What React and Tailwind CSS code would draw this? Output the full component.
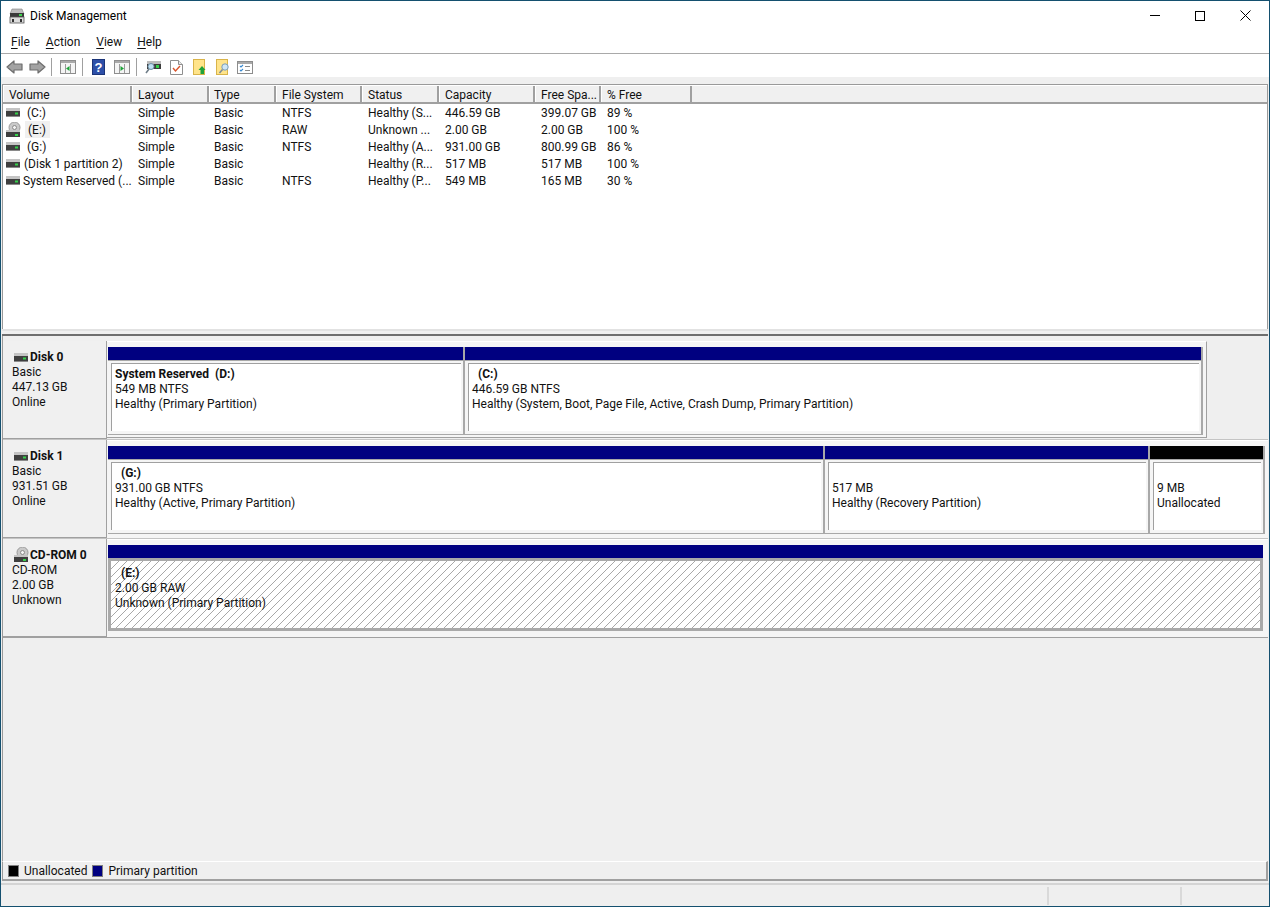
import React from "react";

const HEADER_WIDTHS = ["w-[129px]", "w-[77px]", "w-[67px]", "w-[86px]", "w-[77px]", "w-[96px]", "w-[66px]", "w-[91px]"];
const COL_WIDTHS = ["w-[128px]", "w-[76px]", "w-[68px]", "w-[86px]", "w-[77px]", "w-[96px]", "w-[66px]", "w-[91px]"];
const COLUMNS = ["Volume", "Layout", "Type", "File System", "Status", "Capacity", "Free Spa...", "% Free"];

const VOLUMES = [
  { icon: "hdd", offset: "ml-[4px]", name: " (C:)", cells: ["Simple", "Basic", "NTFS", "Healthy (S...", "446.59 GB", "399.07 GB", "89 %"] },
  { icon: "cd", offset: "ml-[4px]", name: " (E:)", selected: true, cells: ["Simple", "Basic", "RAW", "Unknown ...", "2.00 GB", "2.00 GB", "100 %"] },
  { icon: "hdd", offset: "ml-[4px]", name: " (G:)", cells: ["Simple", "Basic", "NTFS", "Healthy (A...", "931.00 GB", "800.99 GB", "86 %"] },
  { icon: "hdd", offset: "ml-[4px]", name: "(Disk 1 partition 2)", cells: ["Simple", "Basic", "", "Healthy (R...", "517 MB", "517 MB", "100 %"] },
  { icon: "hdd", offset: "ml-[3px]", name: "System Reserved (...", cells: ["Simple", "Basic", "NTFS", "Healthy (P...", "549 MB", "165 MB", "30 %"] },
];

function HddIcon() {
  return (
    <svg width="14" height="9" viewBox="0 0 14 9" className="shrink-0">
      <rect x="0" y="0" width="14" height="3" fill="#c4c4c4" />
      <rect x="0" y="3" width="14" height="5" fill="#3f3f3f" />
      <rect x="0" y="8" width="14" height="1" fill="#8a8a8a" />
      <rect x="9" y="4.5" width="3" height="2" fill="#35d04a" />
    </svg>
  );
}

function CdIcon() {
  return (
    <svg width="15" height="16" viewBox="0 0 15 16" className="shrink-0">
      <circle cx="8.5" cy="5.5" r="5.5" fill="#c9c9c9" stroke="#9a9a9a" />
      <circle cx="8.5" cy="5.5" r="2" fill="#f4f4f4" stroke="#8a8a8a" />
      <rect x="0" y="8" width="14" height="2" fill="#c4c4c4" />
      <rect x="0" y="10" width="14" height="5" fill="#3f3f3f" />
      <rect x="9" y="12" width="3" height="2" fill="#35d04a" />
    </svg>
  );
}

function AppIcon() {
  return (
    <svg width="16" height="16" viewBox="0 0 16 16" className="shrink-0">
      <path d="M3 1h10l2 5H1z" fill="#bdbdbd" stroke="#7f7f7f" strokeWidth="0.6" />
      <rect x="1" y="5" width="14" height="4" fill="#3a3a3a" />
      <rect x="10" y="6" width="3" height="2" fill="#3fd44f" />
      <rect x="1" y="9" width="14" height="6" fill="#dcdcdc" stroke="#555" strokeWidth="0.8" />
      <rect x="3" y="11" width="2" height="3" fill="#333" />
      <rect x="11" y="11" width="2" height="3" fill="#333" />
    </svg>
  );
}

function ArrowIcon({ flip }) {
  return (
    <svg width="17" height="14" viewBox="0 0 17 14" className={flip ? "-scale-x-100" : ""}>
      <path d="M1 7 8 1v3h8v6H8v3z" fill="#a3a3a3" stroke="#6e6e6e" strokeWidth="1.2" strokeLinejoin="round" />
    </svg>
  );
}

function PaneIcon({ right }) {
  return (
    <svg width="16" height="14" viewBox="0 0 16 14">
      <rect x="0.5" y="0.5" width="15" height="13" fill="#f4f4f4" stroke="#8d8d8d" />
      <rect x="1" y="1" width="14" height="2" fill="#a9a9a9" />
      <path d="M5.5 4v9M10.5 4v9" stroke="#9a9a9a" />
      {right ? <path d="M6.5 6v5l3.5-2.5z" fill="#1fa33a" /> : <path d="M9.5 6v5L6 8.5z" fill="#1fa33a" />}
    </svg>
  );
}

function HelpIcon() {
  return (
    <div className="w-[13px] h-[16px] bg-[#2d4fa8] border border-[#1b3478] flex items-center justify-center text-white text-[13px] font-bold leading-none font-['Liberation_Sans',sans-serif]">
      ?
    </div>
  );
}

function RescanIcon() {
  return (
    <svg width="16" height="14" viewBox="0 0 16 14">
      <rect x="2" y="1" width="14" height="3" fill="#bdbdbd" />
      <rect x="2" y="4" width="14" height="5" fill="#3d3d3d" />
      <rect x="11" y="5" width="3" height="3" fill="#35d04a" />
      <circle cx="6" cy="6.5" r="3" fill="#bfe0f2" stroke="#6f8fa6" />
      <path d="M4 9 1 13" stroke="#6f7d88" strokeWidth="1.6" />
    </svg>
  );
}

function CheckDocIcon() {
  return (
    <svg width="13" height="15" viewBox="0 0 13 15">
      <path d="M.5.5h8l4 4v10H.5z" fill="#fff" stroke="#8f8f8f" />
      <path d="M8.5.5v4h4" fill="#e8e8e8" stroke="#8f8f8f" />
      <path d="m3 8 2.5 3L10 6" fill="none" stroke="#d9542b" strokeWidth="1.4" />
    </svg>
  );
}

function YellowIcon({ children }) {
  return (
    <svg width="14" height="16" viewBox="0 0 14 16" className="overflow-visible">
      <rect x="0.5" y="0.5" width="11" height="15" fill="#ffe48a" stroke="#d9b44a" />
      {children}
    </svg>
  );
}

function PropsIcon() {
  return (
    <svg width="16" height="13" viewBox="0 0 16 13">
      <rect x="0.5" y="0.5" width="15" height="12" fill="#fff" stroke="#8d8d8d" />
      <rect x="1" y="1" width="14" height="2" fill="#a9a9a9" />
      <path d="m3 5 1 1 2-2M3 9l1 1 2-2" fill="none" stroke="#3a8ad0" strokeWidth="1.1" />
      <path d="M8 5.5h5M8 9.5h5" stroke="#8a8a8a" />
    </svg>
  );
}

function ToolbarSep({ className }) {
  return <div className={`w-px h-[18px] bg-[#a0a0a0] ${className}`} />;
}

function TitleBar() {
  return (
    <div className="h-[29px] bg-white flex items-center shrink-0">
      <div className="ml-[8px]">
        <AppIcon />
      </div>
      <span className="ml-[5px] text-black pt-[1px]">Disk Management</span>
      <div className="ml-auto flex items-center mr-[18px]">
        <div className="w-[10px] h-px bg-black" />
        <div className="w-[10px] h-[10px] border border-black ml-[35px]" />
        <svg width="11" height="11" viewBox="0 0 11 11" className="ml-[35px]">
          <path d="M.5.5l10 10M10.5.5l-10 10" stroke="#000" />
        </svg>
      </div>
    </div>
  );
}

function MenuBar() {
  const items = [
    { key: "F", rest: "ile", cls: "ml-[10px]" },
    { key: "A", rest: "ction", cls: "ml-[16px]" },
    { key: "V", rest: "iew", cls: "ml-[16px]" },
    { key: "H", rest: "elp", cls: "ml-[15px]" },
  ];
  return (
    <div className="h-[24px] bg-white flex items-center shrink-0 border-b border-[#a9a9a9] pt-[1px]">
      {items.map((m) => (
        <span key={m.key} className={m.cls}>
          <span className="underline underline-offset-2">{m.key}</span>
          {m.rest}
        </span>
      ))}
    </div>
  );
}

function Toolbar() {
  return (
    <div className="h-[23px] bg-white flex items-center shrink-0 pt-[3px]">
      <div className="ml-[5px]"><ArrowIcon /></div>
      <div className="ml-[6px]"><ArrowIcon flip /></div>
      <ToolbarSep className="ml-[5px]" />
      <div className="ml-[8px]"><PaneIcon /></div>
      <ToolbarSep className="ml-[6px]" />
      <div className="ml-[9px]"><HelpIcon /></div>
      <div className="ml-[9px]"><PaneIcon right /></div>
      <ToolbarSep className="ml-[6px]" />
      <div className="ml-[8px]"><RescanIcon /></div>
      <div className="ml-[9px]"><CheckDocIcon /></div>
      <div className="ml-[10px]">
        <YellowIcon>
          <path d="M9 7l3.5 4H11v4H7.5v-4H5.5z" fill="#1fa33a" />
        </YellowIcon>
      </div>
      <div className="ml-[9px]">
        <YellowIcon>
          <circle cx="9" cy="8" r="3.2" fill="#cfe6f5" stroke="#7b9db5" />
          <path d="M6.5 10.5 3.5 14" stroke="#7f8c96" strokeWidth="1.6" />
        </YellowIcon>
      </div>
      <div className="ml-[7px]"><PropsIcon /></div>
    </div>
  );
}

function VolumeList() {
  return (
    <div className="h-[245px] shrink-0 ml-px mr-px bg-white border-t border-l border-r border-[#9a9a9a] flex flex-col">
      <div className="h-[19px] flex bg-[#f0f0f0] border-t border-white border-b-2 border-b-[#a0a0a0] shrink-0">
        {COLUMNS.map((c, i) => (
          <div key={c} className={`${HEADER_WIDTHS[i]} ${i === 2 ? "pl-[4px]" : "pl-[5px]"} h-full pt-[1px] flex items-center whitespace-nowrap border-r-2 border-[#a0a0a0] border-l border-l-white`}>
            {c}
          </div>
        ))}
      </div>
      <div>
        {VOLUMES.map((v) => (
          <div key={v.name} className="h-[17px] flex items-center">
            <div className={`${COL_WIDTHS[0]} h-full flex items-center pl-[3px]`}>
              {v.icon === "hdd" ? <HddIcon /> : <CdIcon />}
              <span className={`${v.offset} whitespace-pre h-full flex items-center pr-[4px] ${v.selected ? "bg-[#f0f0f0]" : ""}`}>{v.name}</span>
            </div>
            {v.cells.map((cell, i) => (
              <div key={i} className={`${COL_WIDTHS[i + 1]} pl-[7px] whitespace-nowrap`}>{cell}</div>
            ))}
          </div>
        ))}
      </div>
    </div>
  );
}

function DiskLabel({ icon, name, lines }) {
  return (
    <div className="w-[104px] shrink-0 bg-[#f0f0f0] border-r border-b border-[#a0a0a0] pl-[9px] pt-[8px]">
      <div className="h-[16px] flex items-center font-bold">
        <div className="w-[16px] ml-[2px] shrink-0 flex">{icon === "cd" ? <CdIcon /> : <HddIcon />}</div>
        <span className="whitespace-nowrap">{name}</span>
      </div>
      {lines.map((l) => (
        <div key={l} className="h-[15px] leading-[15px] whitespace-nowrap">{l}</div>
      ))}
    </div>
  );
}

function Partition({ width, bar = "bg-[#000080]", lines, title, titleIndent }) {
  return (
    <div className={`${width} shrink-0 h-[88px] flex flex-col border-r-2 border-b border-[#a8a8a8]`}>
      <div className={`h-[13px] shrink-0 ${bar}`} />
      <div className="h-px bg-[#a8a8a8] shrink-0" />
      <div className="flex-1 pl-[3px] pr-[2px] pt-[2px] pb-[3px] flex">
        <div className="flex-1 bg-white border-t border-l border-[#a0a0a0] pl-[3px] pt-[3px]">
          <div className={`h-[15px] leading-[15px] whitespace-pre font-bold ${titleIndent}`}>{title}</div>
          {lines.map((l) => (
            <div key={l} className="h-[15px] leading-[15px] whitespace-nowrap">{l}</div>
          ))}
        </div>
      </div>
    </div>
  );
}

function Disk0() {
  return (
    <div className="h-[99px] flex shrink-0 border-b border-[#c4c4c4]">
      <DiskLabel name="Disk 0" lines={["Basic", "447.13 GB", "Online"]} />
      <div className="h-[97px] bg-[#f5f5f5] border-t border-white border-r border-r-[#a0a0a0] border-b border-b-[#a0a0a0] pl-px pt-[5px] flex w-[1100px] shrink-0">
        <Partition width="w-[357px]" title="System Reserved  (D:)" lines={["549 MB NTFS", "Healthy (Primary Partition)"]} />
        <Partition width="w-[738px]" title=" (C:)" lines={["446.59 GB NTFS", "Healthy (System, Boot, Page File, Active, Crash Dump, Primary Partition)"]} titleIndent="pl-[3px]" />
      </div>
    </div>
  );
}

function Disk1() {
  return (
    <div className="h-[99px] flex shrink-0 border-b border-[#c4c4c4]">
      <DiskLabel name="Disk 1" lines={["Basic", "931.51 GB", "Online"]} />
      <div className="flex-1 bg-[#f5f5f5] border-t border-white pl-px pt-[5px] flex">
        <Partition width="w-[717px]" title=" (G:)" lines={["931.00 GB NTFS", "Healthy (Active, Primary Partition)"]} titleIndent="pl-[3px]" />
        <Partition width="w-[325px]" title=" " lines={["517 MB", "Healthy (Recovery Partition)"]} />
        <Partition width="w-[115px]" bar="bg-black" title=" " lines={["9 MB", "Unallocated"]} />
      </div>
    </div>
  );
}

function CdRom() {
  return (
    <div className="h-[99px] flex shrink-0 border-b border-[#a0a0a0]">
      <DiskLabel icon="cd" name="CD-ROM 0" lines={["CD-ROM", "2.00 GB", "Unknown"]} />
      <div className="flex-1 bg-[#f5f5f5] border-t border-white pl-px pt-[5px] flex">
        <div className="w-[1155px] shrink-0 h-[86px] flex flex-col">
          <div className="h-[13px] shrink-0 bg-[#000080]" />
          <div className="flex-1 border-[3px] border-[#a9a9a9] bg-[linear-gradient(135deg,#a8a8a8_0,#a8a8a8_6%,#fff_6%,#fff_44%,#a8a8a8_44%,#a8a8a8_56%,#fff_56%,#fff_94%,#a8a8a8_94%)] bg-[length:8px_8px] pl-[4px] pt-[5px]">
            <div className="h-[15px] leading-[15px] whitespace-pre font-bold pl-[3px]"> (E:)</div>
            <div className="h-[15px] leading-[15px]">2.00 GB RAW</div>
            <div className="h-[15px] leading-[15px]">Unknown (Primary Partition)</div>
          </div>
        </div>
      </div>
    </div>
  );
}

function Legend() {
  return (
    <div className="h-[20px] shrink-0 ml-px mr-px border-t border-white border-l border-l-[#9a9a9a] border-b-2 border-b-[#a0a0a0] border-r-2 border-r-[#a0a0a0] flex items-center pl-[5px]">
      <div className="w-[11px] h-[12px] bg-black border border-[#808080]" />
      <span className="ml-[5px]">Unallocated</span>
      <div className="w-[11px] h-[12px] bg-[#000080] border border-[#808080] ml-[5px]" />
      <span className="ml-[5px]">Primary partition</span>
    </div>
  );
}

function StatusBar() {
  return (
    <div className="h-[23px] shrink-0 mt-[2px] border-t-2 border-[#d4d4d4] flex justify-end pt-[2px] pb-[1px] pr-[2px]">
      <div className="w-[133px] border-l-2 border-[#d9d9d9]" />
      <div className="w-[87px] border-l-2 border-[#d9d9d9]" />
    </div>
  );
}

export default function App() {
  return (
    <div className="w-[1270px] h-[907px] bg-[#efefef] border border-[#14506f] flex flex-col overflow-hidden text-[12px] leading-none text-[#111] font-['Roboto',sans-serif]">
      <TitleBar />
      <MenuBar />
      <Toolbar />
      <div className="h-[7px] shrink-0" />
      <VolumeList />
      <div className="h-[7px] shrink-0 ml-px mr-px border-t-2 border-[#e2e2e2] border-b-2 border-b-[#6e6e6e]" />
      <div className="flex-1 ml-px mr-px border-l border-[#9a9a9a] pt-[5px] flex flex-col">
        <Disk0 />
        <Disk1 />
        <CdRom />
      </div>
      <Legend />
      <StatusBar />
    </div>
  );
}
